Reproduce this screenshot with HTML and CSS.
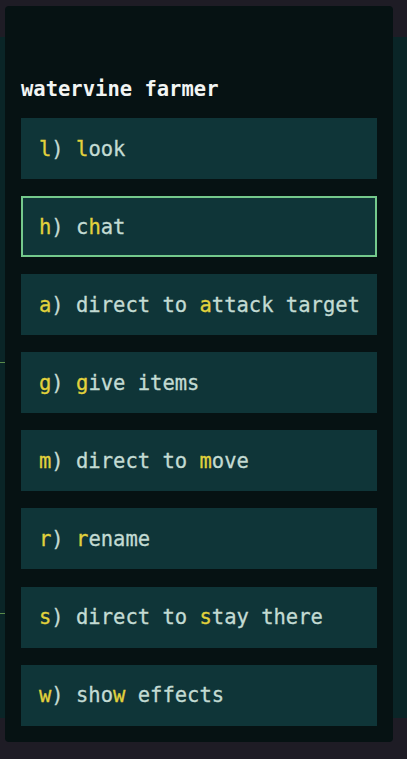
FILE: index.html
```html
<!DOCTYPE html>
<html lang="en">
<head>
<meta charset="UTF-8">
<meta name="viewport" content="width=device-width, initial-scale=1.0">
<title>watervine farmer</title>
<link rel="stylesheet" href="styles.css">
</head>
<body>

<!-- game view behind the menu -->
<div class="world">
  <div class="rule rule-top"></div>
  <div class="rule rule-bottom"></div>
</div>

<div class="menu">
  <div class="menu-title">watervine farmer</div>

  <div class="option"><span class="key">l</span>) <span class="key">l</span>ook</div>
  <div class="option selected"><span class="key">h</span>) c<span class="key">h</span>at</div>
  <div class="option"><span class="key">a</span>) direct to <span class="key">a</span>ttack target</div>
  <div class="option"><span class="key">g</span>) <span class="key">g</span>ive items</div>
  <div class="option"><span class="key">m</span>) direct to <span class="key">m</span>ove</div>
  <div class="option"><span class="key">r</span>) <span class="key">r</span>ename</div>
  <div class="option"><span class="key">s</span>) direct to <span class="key">s</span>tay there</div>
  <div class="option"><span class="key">w</span>) sho<span class="key">w</span> effects</div>
</div>

</body>
</html>
```

FILE: styles.css
```css
html, body {
  margin: 0;
  padding: 0;
  height: 100%;
}

body {
  background-color: #1e1c25;
  font-family: "DejaVu Sans Mono", "Liberation Mono", monospace;
  position: relative;
  overflow: hidden;
}

/* teal band of the game map */
.world {
  position: absolute;
  left: 0;
  right: 0;
  top: 37px;
  height: 681px;
  background-color: #0a2527;
}

.rule {
  position: absolute;
  left: 0;
  width: 6px;
  height: 1px;
  background-color: #5a8a4a;
}
.rule-top { top: 325px; }
.rule-bottom { top: 576px; }

.menu {
  position: absolute;
  left: 5px;
  top: 6px;
  width: 388px;
  box-sizing: border-box;
  padding: 16px;
  background-color: #061213;
  border-radius: 4px;
}

.menu-title {
  padding-top: 55px;
  line-height: 24px;
  margin-bottom: 17px;
  color: #f2f5f3;
  font-size: 20.5px;
  font-weight: bold;
}

.option {
  height: 61px;
  box-sizing: border-box;
  display: flex;
  align-items: center;
  padding-left: 18px;
  margin-bottom: 17.1px;
  background-color: #0f3538;
  color: #c3dbd3;
  font-size: 20.5px;
  white-space: pre;
  -webkit-text-stroke: 0.3px;
}
.option:last-child {
  margin-bottom: 0;
}

.option.selected {
  border: 2px solid #74c98c;
  padding-left: 16px;
}

.key {
  color: #e2d23c;
}
```
